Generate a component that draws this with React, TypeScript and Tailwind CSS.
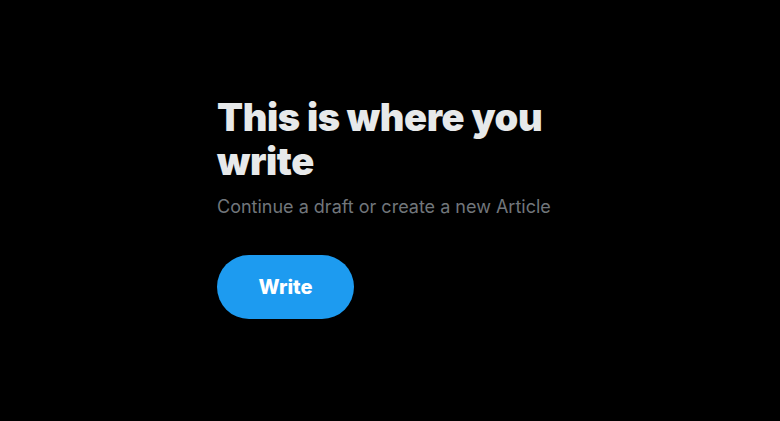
import React from 'react'

export default function App() {
    return (
        <div className="h-screen w-full bg-black flex justify-center items-center pb-[8px] font-['Inter','Liberation_Sans',sans-serif]">
            <div className="w-[346px] flex flex-col items-start">
                <h1 className="text-[38px] leading-[44px] font-black text-[#e7e9ea] tracking-[-0.4px]">
                    This is where you write
                </h1>
                <p className="mt-[12px] text-[18px] leading-[24px] text-[#71767b]">
                    Continue a draft or create a new Article
                </p>
                <button className="mt-[36px] h-[64px] w-[137px] rounded-full bg-[#1d9bf0] text-white text-[20px] font-extrabold">
                    Write
                </button>
            </div>
        </div>
    )
}
